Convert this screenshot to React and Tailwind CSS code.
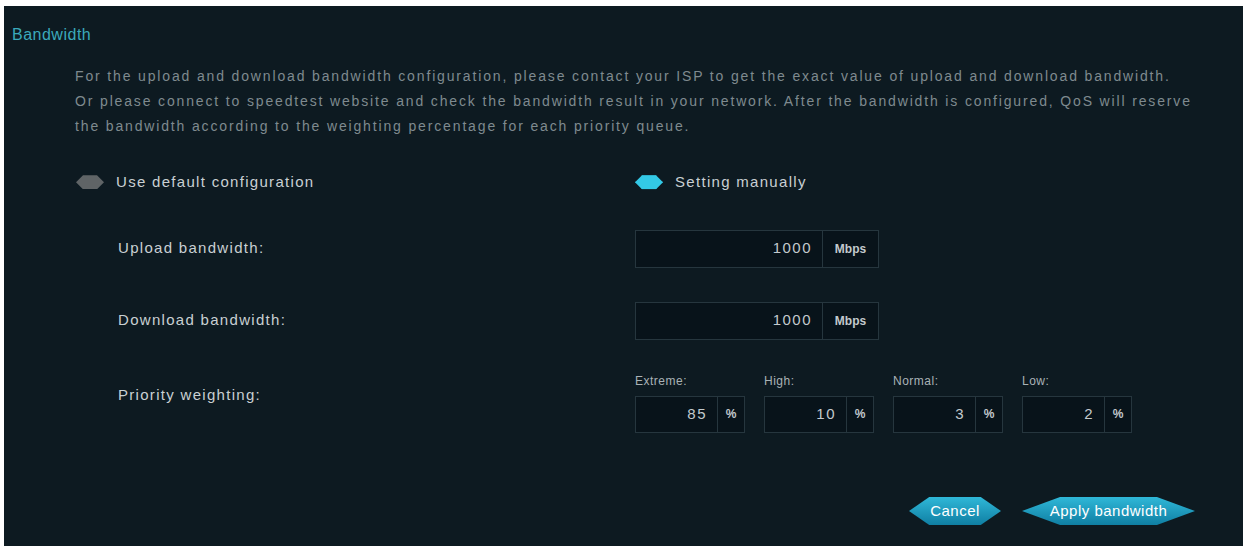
import React from 'react';

const hex = '[clip-path:polygon(0_50%,22%_0,78%_0,100%_50%,78%_100%,22%_100%)]';

function Radio({ label, checked }) {
  return (
    <div className="flex items-center gap-3">
      <span
        className={
          'block w-[28px] h-[14px] [clip-path:polygon(0_50%,25%_0,75%_0,100%_50%,75%_100%,25%_100%)] ' +
          (checked ? 'bg-[#33c9e6] shadow-[0_0_6px_#33c9e6]' : 'bg-[#5f6466]')
        }
      />
      <span className="text-[15px] tracking-[1.3px] text-[#c9d0d3]">{label}</span>
    </div>
  );
}

function UnitInput({ value, unit, width, unitWidth, height }) {
  return (
    <div className={'flex border border-[#26363e] bg-[#08131a] ' + width + ' ' + height}>
      <div className="flex-1 flex items-center justify-end pr-[10px] text-[15px] text-[#c3cacd] tracking-[1.5px]">
        {value}
      </div>
      <div className={'flex items-center justify-center border-l border-[#26363e] text-[12px] font-bold text-[#c3cacd] ' + unitWidth}>
        {unit}
      </div>
    </div>
  );
}

const weights = [
  { name: 'Extreme:', value: '85' },
  { name: 'High:', value: '10' },
  { name: 'Normal:', value: '3' },
  { name: 'Low:', value: '2' },
];

const lines = [
  'For the upload and download bandwidth configuration, please contact your ISP to get the exact value of upload and download bandwidth.',
  'Or please connect to speedtest website and check the bandwidth result in your network. After the bandwidth is configured, QoS will reserve',
  'the bandwidth according to the weighting percentage for each priority queue.',
];

export default function App() {
  return (
    <div className="w-[1248px] h-[551px] bg-white pt-[6px] pl-[4px] pr-[5px] pb-[5px] font-['Liberation_Sans',Arial,sans-serif]">
      <div className="h-full bg-[#0d1a21] flex flex-col">
        <h2 className="pl-[8px] pt-[18px] text-[16px] leading-[22px] tracking-[0.5px] text-[#3ba9bb]">Bandwidth</h2>

        <div className="mt-[18px] ml-[71px] text-[14px] leading-[25px] tracking-[1.85px] text-[#7f8a8f]">
          {lines.map((l) => (
            <div key={l} className="whitespace-nowrap">{l}</div>
          ))}
        </div>

        <div className="mt-[32px] flex">
          <div className="ml-[72px] w-[559px]">
            <Radio label="Use default configuration" />
          </div>
          <Radio label="Setting manually" checked />
        </div>

        <div className="mt-[36px] flex items-center">
          <div className="ml-[114px] w-[517px] text-[15px] tracking-[1.3px] text-[#c9d0d3]">Upload bandwidth:</div>
          <UnitInput value="1000" unit="Mbps" width="w-[244px]" unitWidth="w-[56px]" height="h-[38px]" />
        </div>

        <div className="mt-[34px] flex items-center">
          <div className="ml-[114px] w-[517px] text-[15px] tracking-[1.3px] text-[#c9d0d3]">Download bandwidth:</div>
          <UnitInput value="1000" unit="Mbps" width="w-[244px]" unitWidth="w-[56px]" height="h-[38px]" />
        </div>

        <div className="mt-[32px] flex items-start">
          <div className="ml-[114px] mt-[12px] w-[517px] text-[15px] tracking-[1.3px] text-[#c9d0d3]">Priority weighting:</div>
          <div className="flex gap-[19px]">
            {weights.map((w) => (
              <div key={w.name} className="flex flex-col">
                <span className="text-[12px] leading-[18px] tracking-[0.5px] text-[#a9b2b6] mb-[6px]">{w.name}</span>
                <UnitInput value={w.value} unit="%" width="w-[110px]" unitWidth="w-[27px]" height="h-[37px]" />
              </div>
            ))}
          </div>
        </div>

        <div className="mt-auto mb-[21px] mr-[48px] flex justify-end gap-[21px]">
          <button className={'h-[28px] w-[92px] text-[15px] tracking-[0.5px] text-white bg-gradient-to-b from-[#2fb8d8] to-[#0f7fa3] ' + hex}>
            Cancel
          </button>
          <button className={'h-[28px] w-[173px] text-[15px] tracking-[0.5px] text-white bg-gradient-to-b from-[#2fb8d8] to-[#0f7fa3] ' + hex}>
            Apply bandwidth
          </button>
        </div>
      </div>
    </div>
  );
}
